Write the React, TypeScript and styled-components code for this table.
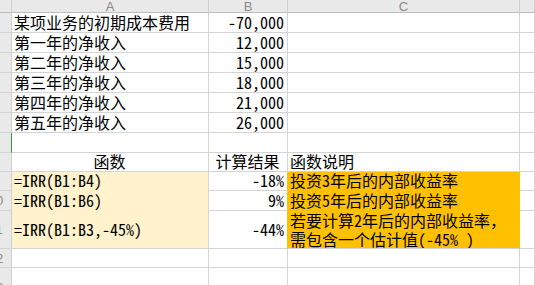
import * as React from 'react'
import styled, { createGlobalStyle } from 'styled-components'

const GlobalStyle = createGlobalStyle`
  html, body {
    margin: 0;
    padding: 0;
    background: #ffffff;
  }
  body {
    font-family: "Noto Sans CJK SC", sans-serif;
  }
`

const GRID = '#d4d4d4'
const CREAM = '#fff2cc'
const AMBER = '#ffc000'
const FONT = '"Noto Sans Mono CJK SC", "Noto Sans CJK SC", sans-serif'

// 行の高さ（下の罫線込み）
const rowHeights = [13, 20, 20, 20, 20, 20, 20, 20, 19, 19, 20, 38, 19, 40]

const Sheet = styled.div`
  display: grid;
  grid-template-columns: 12px 197px 79px 232px 1fr;
  grid-template-rows: ${rowHeights.map((h) => `${h}px`).join(' ')};
  width: 535px;
  height: 285px;
  overflow: hidden;
`

const ColHead = styled.div`
  box-sizing: border-box;
  background: #e9e9e9;
  border-right: 1px solid #cfcfcf;
  border-bottom: 1px solid #bdbdbd;
  display: flex;
  align-items: flex-end;
  justify-content: center;
  overflow: hidden;
  color: #8a8a8a;
  font-family: "Liberation Sans", sans-serif;
  font-size: 13px;
  line-height: 11px;
`

const RowHead = styled.div<{ $active?: boolean }>`
  box-sizing: border-box;
  background: #e9e9e9;
  border-right: 1px solid ${(p) => (p.$active ? '#2e9a4a' : '#cfcfcf')};
  border-bottom: 1px solid #d4d4d4;
  overflow: hidden;
  display: flex;
  align-items: center;
`

const RowNum = styled.span`
  flex: none;
  width: 30px;
  margin-left: -19px;
  text-align: center;
  color: #8a8a8a;
  font-family: "Liberation Sans", sans-serif;
  font-size: 13px;
`

type CellProps = {
  $bg?: string
  $right?: string
  $bottom?: string
  $align?: 'left' | 'right' | 'center'
  $mid?: boolean
}

const Cell = styled.div<CellProps>`
  box-sizing: border-box;
  background: ${(p) => p.$bg || '#ffffff'};
  border-right: 1px solid ${(p) => p.$right || GRID};
  border-bottom: 1px solid ${(p) => p.$bottom || GRID};
  display: flex;
  flex-direction: column;
  justify-content: ${(p) => (p.$mid ? 'center' : 'flex-end')};
  text-align: ${(p) => p.$align || 'left'};
  padding: 0 3px 0 2px;
  color: #000000;
  white-space: nowrap;
  overflow: hidden;
  font-family: ${FONT};
  font-size: 16px;
  line-height: 19px;
`

const dataRows: [string, string][] = [
  ['某项业务的初期成本费用', '-70,000'],
  ['第一年的净收入', '12,000'],
  ['第二年的净收入', '15,000'],
  ['第三年的净收入', '18,000'],
  ['第四年的净收入', '21,000'],
  ['第五年的净收入', '26,000'],
]

const RowHeader: React.FC<{ n: number; active?: boolean }> = ({ n, active }) => (
  <RowHead $active={active}>
    <RowNum>{n}</RowNum>
  </RowHead>
)

export default function App() {
  return (
    <>
      <GlobalStyle />
      <Sheet>
        <ColHead />
        <ColHead>A</ColHead>
        <ColHead>B</ColHead>
        <ColHead>C</ColHead>
        <ColHead />

        {dataRows.map(([label, value], i) => (
          <React.Fragment key={label}>
            <RowHeader n={i + 1} />
            <Cell>{label}</Cell>
            <Cell $align="right">{value}</Cell>
            <Cell />
            <Cell />
          </React.Fragment>
        ))}

        <RowHeader n={7} active />
        <Cell />
        <Cell />
        <Cell />
        <Cell />

        <RowHeader n={8} />
        <Cell $align="center">函数</Cell>
        <Cell $align="center">计算结果</Cell>
        <Cell>函数说明</Cell>
        <Cell />

        <RowHeader n={9} />
        <Cell $bg={CREAM} $bottom={CREAM}>=IRR(B1:B4)</Cell>
        <Cell $align="right" $right={AMBER}>-18%</Cell>
        <Cell $bg={AMBER} $bottom={AMBER} $right={AMBER}>投资3年后的内部收益率</Cell>
        <Cell />

        <RowHeader n={10} />
        <Cell $bg={CREAM} $bottom={CREAM}>=IRR(B1:B6)</Cell>
        <Cell $align="right" $right={AMBER}>9%</Cell>
        <Cell $bg={AMBER} $bottom={AMBER} $right={AMBER}>投资5年后的内部收益率</Cell>
        <Cell />

        <RowHeader n={11} />
        <Cell $mid $bg={CREAM}>=IRR(B1:B3,-45%)</Cell>
        <Cell $mid $align="right" $right={AMBER}>-44%</Cell>
        <Cell $mid $bg={AMBER} $right={AMBER}>
          <span>若要计算2年后的内部收益率，</span>
          <span>需包含一个估计值(-45% )</span>
        </Cell>
        <Cell />

        <RowHeader n={12} />
        <Cell />
        <Cell />
        <Cell />
        <Cell />

        <RowHeader n={13} />
        <Cell />
        <Cell />
        <Cell />
        <Cell />
      </Sheet>
    </>
  )
}
